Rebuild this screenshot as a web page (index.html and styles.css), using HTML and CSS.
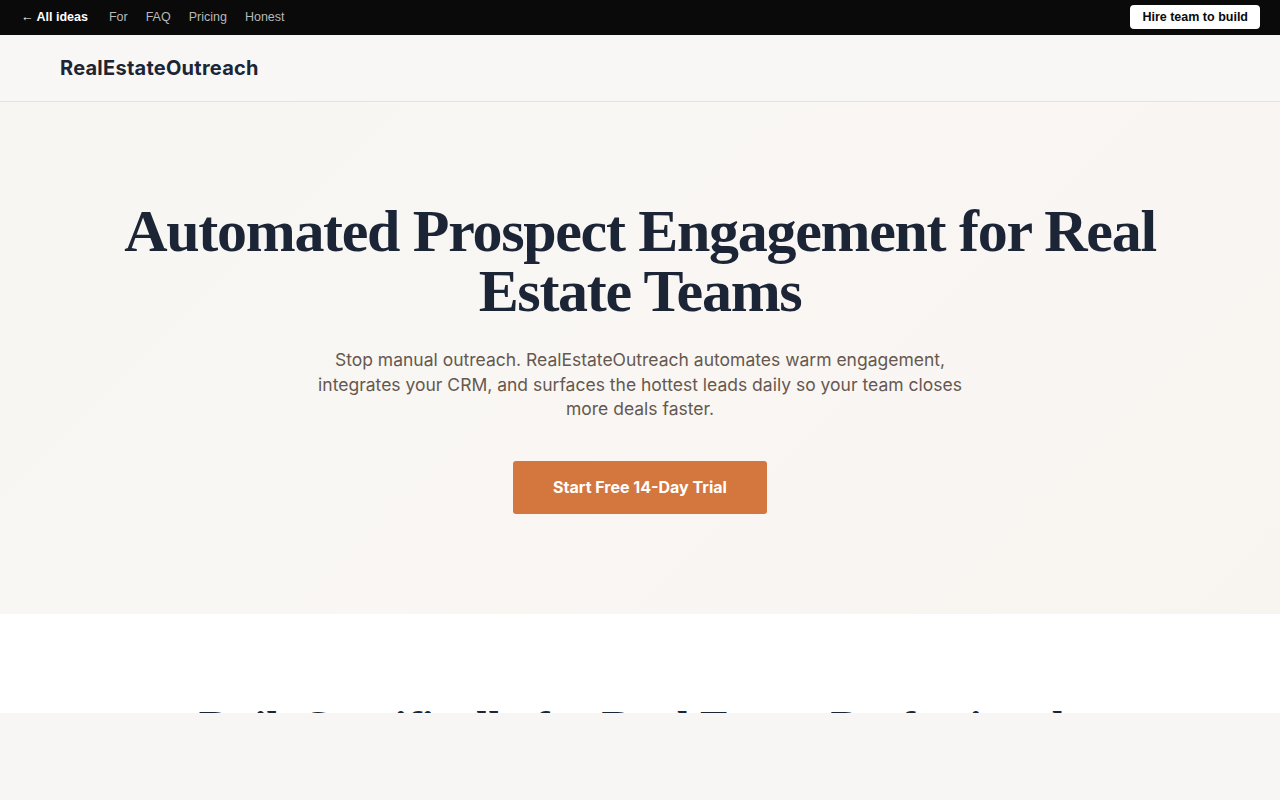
FILE: index.html
```html
<!DOCTYPE html>
<html lang="en">
<head>
    <meta charset="UTF-8">
    <meta name="viewport" content="width=device-width, initial-scale=1.0">
    <title>RealEstateOutreach</title>
    <link rel="stylesheet" href="styles.css">
</head>
<body>
    <div class="topbar">
        <nav class="topbar-links">
            <a href="#" class="back-link">← All ideas</a>
            <a href="#">For</a>
            <a href="#">FAQ</a>
            <a href="#">Pricing</a>
            <a href="#">Honest</a>
        </nav>
        <a href="#" class="hire-btn">Hire team to build</a>
    </div>

    <header class="site-header">
        <div class="brand">RealEstateOutreach</div>
    </header>

    <section class="hero">
        <h1>Automated Prospect Engagement for Real Estate Teams</h1>
        <p class="hero-sub">Stop manual outreach. RealEstateOutreach automates warm engagement, integrates your CRM, and surfaces the hottest leads daily so your team closes more deals faster.</p>
        <a href="#" class="cta-btn">Start Free 14-Day Trial</a>
    </section>

    <section class="features">
        <h2>Built Specifically for Real Estate Professionals</h2>
    </section>

    <!-- bottom strip that stays pinned over the page -->
    <div class="bottom-strip"></div>
</body>
</html>
```

FILE: styles.css
```css
body {
    margin: 0;
    padding: 0;
    font-family: "Liberation Sans", Arial, sans-serif;
    background-color: #fff;
    color: #1c2536;
}
a {
    text-decoration: none;
}
.topbar {
    height: 35px;
    background-color: #0a0a0a;
    display: flex;
    align-items: center;
    justify-content: space-between;
    padding: 0 20px 0 21px;
}
.topbar-links {
    display: flex;
    align-items: center;
    gap: 18px;
    margin-top: -2px;
}
.topbar-links a {
    color: #b8b8b8;
    font-size: 12.5px;
}
.topbar-links .back-link {
    color: #fff;
    font-weight: bold;
    margin-right: 3px;
}
.hire-btn {
    background-color: #fff;
    color: #0a0a0a;
    font-size: 12.5px;
    font-weight: bold;
    padding: 5px 12px;
    border-radius: 4px;
    margin-top: -2px;
}
.site-header {
    height: 66px;
    background-color: #f8f7f5;
    border-bottom: 1px solid #e5e2dc;
    display: flex;
    align-items: center;
    padding: 0 60px;
}
.brand {
    font-family: "Inter", "Liberation Sans", sans-serif;
    font-weight: 700;
    font-size: 20px;
    color: #1c2536;
    letter-spacing: 0.25px;
}
.hero {
    background: linear-gradient(135deg, #f8f6f3 0%, #f9f6f3 50%, #f8f5f1 100%);
    padding: 99px 40px 100px;
    text-align: center;
    height: 313px;
}
.hero h1 {
    font-family: "Liberation Serif", "Times New Roman", serif;
    font-weight: 700;
    font-size: 60px;
    line-height: 60px;
    letter-spacing: -1.3px;
    color: #1c2536;
    margin: 0 auto 27px;
    max-width: 1060px;
}
.hero-sub {
    font-family: "Inter", "Liberation Sans", sans-serif;
    font-size: 17.5px;
    line-height: 24.5px;
    color: #66584f;
    max-width: 670px;
    margin: 0 auto 39px;
}
.cta-btn {
    display: inline-block;
    width: 254px;
    height: 53px;
    line-height: 53px;
    background-color: #d4773e;
    color: #fff;
    font-family: "Inter", "Liberation Sans", sans-serif;
    font-weight: 700;
    font-size: 16px;
    border-radius: 3px;
}
.features {
    padding: 88px 40px 100px;
    text-align: center;
}
.features h2 {
    font-family: "Liberation Serif", "Times New Roman", serif;
    font-weight: 700;
    font-size: 46px;
    line-height: 52px;
    letter-spacing: -0.5px;
    margin: 0;
}
.bottom-strip {
    position: fixed;
    left: 0;
    right: 0;
    bottom: 0;
    height: 87px;
    background-color: #f7f6f4;
}
```
